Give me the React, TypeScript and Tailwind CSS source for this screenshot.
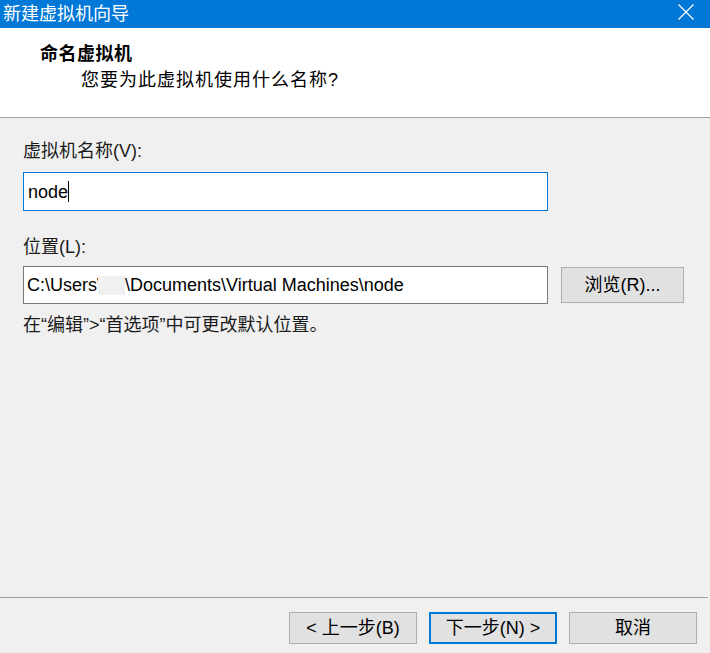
import React from 'react';

const font = { fontFamily: '"Liberation Sans", "Noto Sans CJK SC", sans-serif' };

const WizardButton: React.FC<{ label: string; primary?: boolean }> = ({ label, primary }) => (
  <button
    className={
      primary
        ? 'w-[128px] h-[32px] bg-[#e1e1e1] border-2 border-[#0078d7] text-[18px] leading-none text-black'
        : 'w-[128px] h-[32px] bg-[#e1e1e1] border border-[#adadad] text-[18px] leading-none text-black'
    }
  >
    {label}
  </button>
);

const App: React.FC = () => {
  return (
    <div className="w-[710px] h-[653px] bg-[#f0f0f0] flex flex-col overflow-hidden" style={font}>
      {/* Title bar */}
      <div className="h-[28px] bg-[#0078d7] flex items-center justify-between pl-[3px] pr-[16px]">
        <span className="text-white text-[18px] leading-none">新建虚拟机向导</span>
        <svg width="16" height="16" viewBox="0 0 16 16" className="mb-[4px]">
          <path d="M0.5 0.5 L15.5 15.5 M15.5 0.5 L0.5 15.5" stroke="#ffffff" strokeWidth="1.2" />
        </svg>
      </div>

      {/* Header */}
      <div className="h-[90px] bg-white border-b border-[#a0a0a0] pl-[40px] pt-[16px]">
        <div className="text-[18px] leading-[20px] font-bold tracking-[0.5px] text-black">命名虚拟机</div>
        <div className="pl-[41px] mt-[6px] text-[18px] leading-[20px] tracking-[1px] text-black">
          您要为此虚拟机使用什么名称?
        </div>
      </div>

      {/* Body */}
      <div className="flex-1 px-[23px] pt-[21px] text-[18px] text-[#1a1a1a]">
        <div className="leading-[24px]">虚拟机名称(V):</div>
        <div className="mt-[9px] w-[525px] h-[39px] bg-white border border-[#0078d7] flex items-center pl-[4px]">
          <span className="leading-none text-black">node</span>
          <span className="w-[1px] h-[21px] bg-black" />
        </div>

        <div className="mt-[24px] leading-[24px]">位置(L):</div>
        <div className="mt-[7px] flex items-center gap-[13px]">
          <div className="w-[525px] h-[38px] bg-white border border-[#7a7a7a] flex items-center pl-[3px] text-black">
            <span className="leading-none">C:\Users\</span>
            <span className="inline-block w-[27px] h-[19px] bg-[#f0f0f0] -ml-[4px]" />
            <span className="leading-none">\Documents\Virtual Machines\node</span>
          </div>
          <button className="w-[123px] h-[36px] bg-[#e1e1e1] border border-[#adadad] text-[18px] leading-none text-black">
            浏览(R)...
          </button>
        </div>

        <div className="mt-[9px] leading-[24px]">在“编辑”&gt;“首选项”中可更改默认位置。</div>
      </div>

      {/* Footer */}
      <div className="h-[56px] border-t border-[#a0a0a0] mr-[2px] flex items-start justify-end gap-[12px] pt-[14px] pr-[11px]">
        <WizardButton label="< 上一步(B)" />
        <WizardButton label="下一步(N) >" primary />
        <WizardButton label="取消" />
      </div>
    </div>
  );
};

export default App;
